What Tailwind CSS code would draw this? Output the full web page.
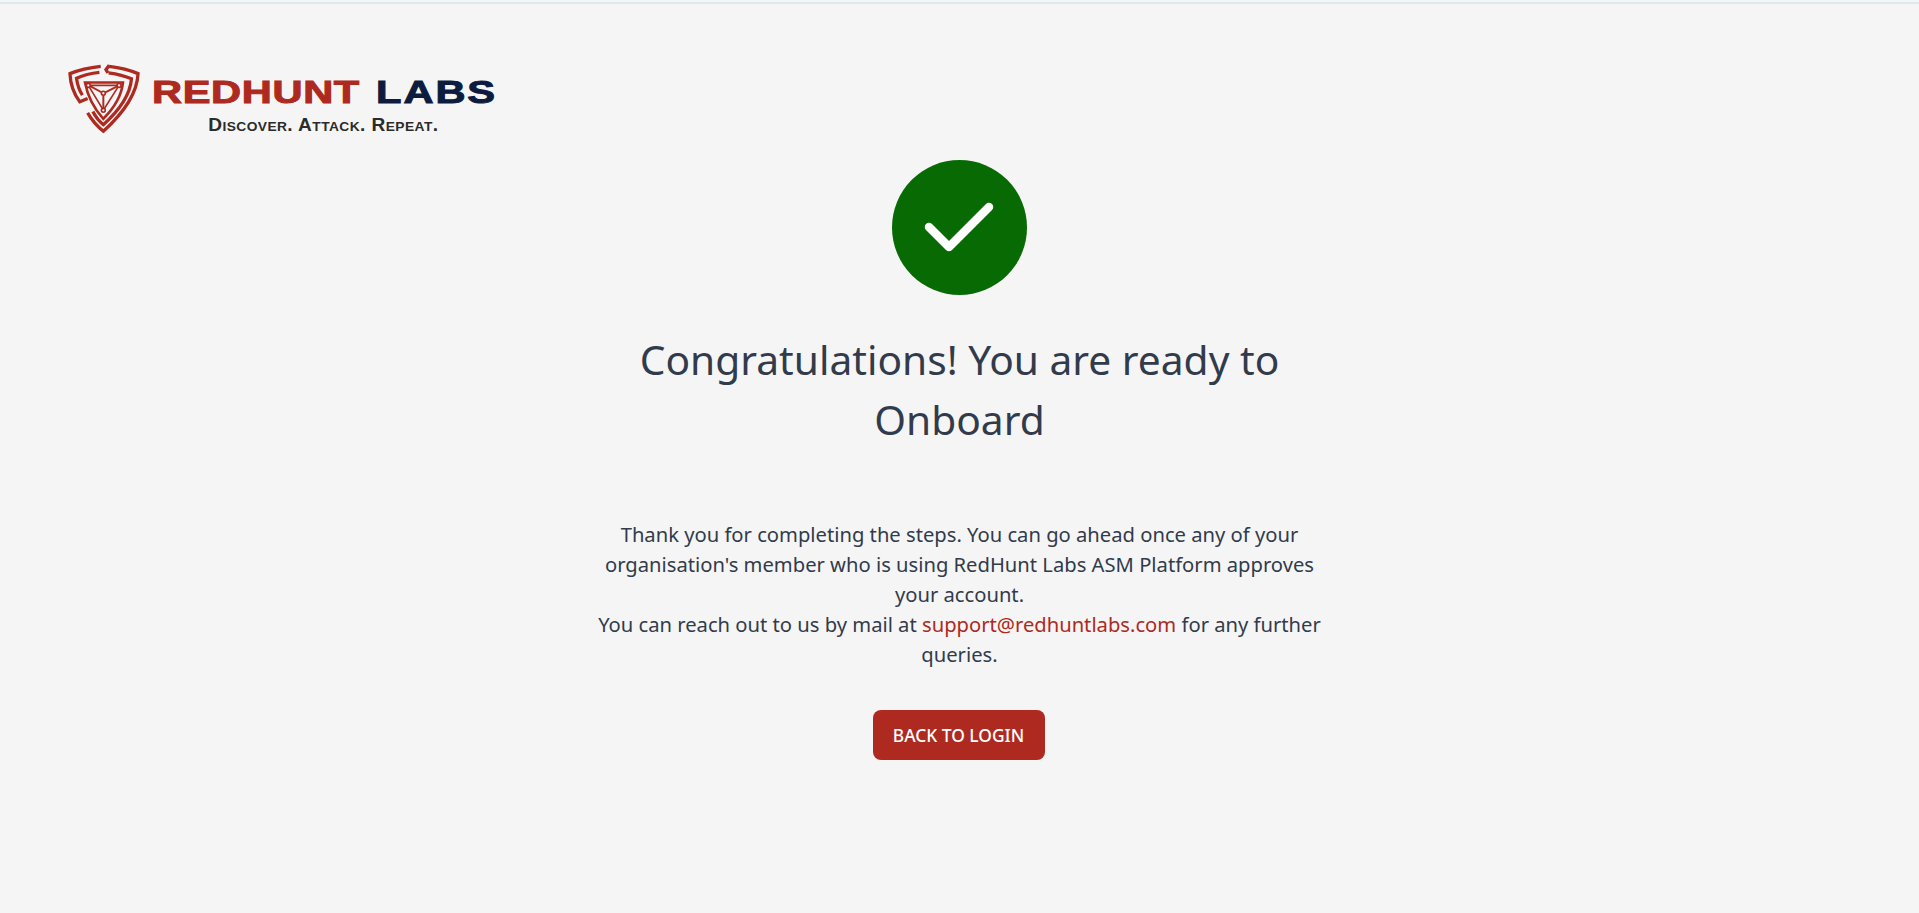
<!DOCTYPE html>
<html lang="en">
<head>
    <meta charset="UTF-8">
    <meta name="viewport" content="width=device-width, initial-scale=1.0">
    <title>RedHunt Labs - Onboarding</title>
    <script src="https://cdn.jsdelivr.net/npm/@tailwindcss/browser@4"></script>
</head>
<body class="bg-[#f5f5f5] h-[913px] overflow-hidden font-['Noto_Sans',sans-serif]">
    <div class="h-[4px] pt-[2px] bg-[#f5f5f5]"><div class="h-[2px] bg-[#dde9f0]"></div></div>

    <!-- logo -->
    <header class="h-[156px] pt-[59px] pl-[68px] flex items-start">
        <svg class="w-[72px] h-[71px] shrink-0" viewBox="24 16 220 212" fill="none" stroke="#ae2a20" stroke-width="10" stroke-linejoin="miter">
            <path d="M124 24 Q70 30 30 46 Q32 95 60 132 L84 122"/>
            <path d="M150 20 L140 34 L146 44 M150 24 Q200 30 238 46 Q234 130 132 222 Q104 200 84 166"/>
            <path d="M120 42 Q80 46 50 60 Q54 90 68 112"/>
            <path d="M148 44 Q190 50 218 62 Q212 130 132 202 Q112 186 100 162"/>
            <path d="M76 73 H192 Q186 130 132 184 Q88 136 76 73 Z" stroke-width="8"/>
            <path d="M86 82 H180 L132 158 Z" stroke-width="5"/>
            <path d="M132 106 V158 M132 106 L92 84 M132 106 L176 84" stroke-width="6"/>
            <circle cx="86" cy="82" r="6" fill="#f5f5f5" stroke-width="5"/>
            <circle cx="180" cy="82" r="6" fill="#f5f5f5" stroke-width="5"/>
            <circle cx="132" cy="106" r="6" fill="#f5f5f5" stroke-width="5"/>
            <circle cx="132" cy="158" r="6" fill="#f5f5f5" stroke-width="5"/>
        </svg>
        <div class="ml-[12px] pt-[14px] w-[345px]">
            <div class="h-[30px] whitespace-nowrap font-['Liberation_Sans',sans-serif] font-bold text-[32px] leading-[30px] tracking-[0.5px] origin-left scale-x-[1.3] [-webkit-text-stroke:1px]">
                <span class="text-[#ae2a20]">REDHUNT</span> <span class="text-[#0d1b3e] ml-[3px] tracking-[1.5px]">LABS</span>
            </div>
            <p class="mt-[9px] pl-[53px] whitespace-nowrap font-['Liberation_Sans',sans-serif] font-bold text-[18px] leading-[18px] tracking-[0.4px] text-[#2b2b2b] [font-variant:small-caps] origin-left scale-x-[1.06]">Discover. Attack. Repeat.</p>
        </div>
    </header>

    <main class="flex flex-col items-center">
        <div class="w-[135px] h-[135px] rounded-full bg-[#086a03] flex items-center justify-center">
            <svg class="w-[135px] h-[135px]" viewBox="0 0 135 135" fill="none" stroke="#ffffff" stroke-width="8.5" stroke-linecap="round" stroke-linejoin="round">
                <path d="M37 67 L57 87 L97 47"/>
            </svg>
        </div>
        <h1 class="mt-[34px] w-[740px] text-center text-[40.7px] leading-[60px] font-normal text-[#323b4b]">Congratulations! You are ready to Onboard</h1>
        <p class="mt-[70px] w-[740px] text-center text-[20.2px] leading-[30px] text-[#323b4b]">
            Thank you for completing the steps. You can go ahead once any of your organisation's member who is using RedHunt Labs ASM Platform approves your account.<br>
            You can reach out to us by mail at <a href="#" class="text-[#ae2a20]">support@redhuntlabs.com</a> for any further queries.
        </p>
        <button class="mt-[41px] mr-[2px] w-[172px] h-[50px] rounded-lg bg-[#ae2a20] text-white text-[17.4px] font-medium">BACK TO LOGIN</button>
    </main>
</body>
</html>
